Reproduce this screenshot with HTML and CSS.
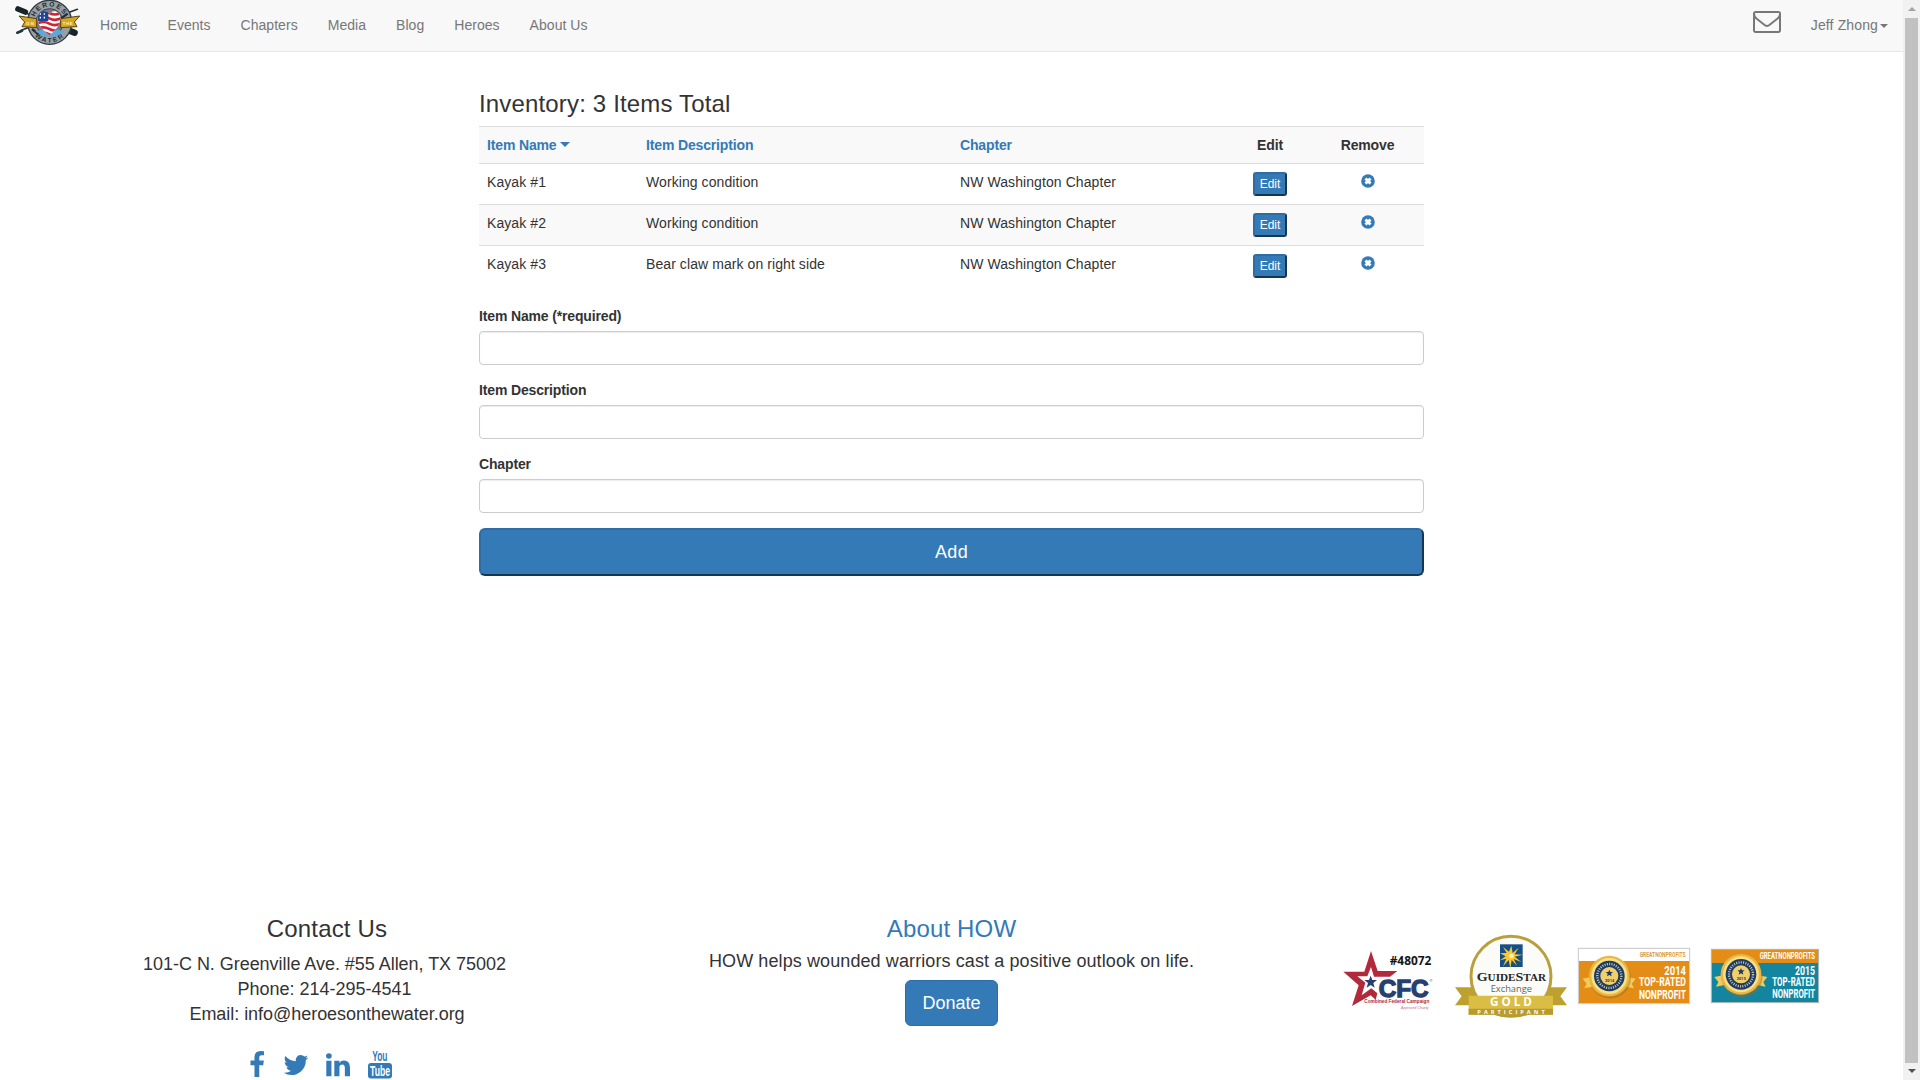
FILE: index.html
```html
<!DOCTYPE html>
<html lang="en">
<head>
<meta charset="utf-8">
<title>Heroes on the Water - Inventory</title>
<link rel="stylesheet" href="styles.css">
</head>
<body>
<div class="page">
  <nav class="navbar">
    <a class="brand" href="#" aria-label="Heroes on the Water">
      <svg width="85" height="47" viewBox="2 1 255 141">
        <g stroke-linecap="round">
          <path d="M70 36L215 92M66 92L234 29" stroke="#2a2f33" stroke-width="5"/>
          <path d="M56 28l22 9" stroke="#15252b" stroke-width="17"/>
          <path d="M196 88l30 11" stroke="#15252b" stroke-width="19"/>
          <path d="M54 99l14-6" stroke="#1d3a44" stroke-width="8"/>
        </g>
        <circle cx="151" cy="68" r="66" fill="#9b9fa3" stroke="#2c3d44" stroke-width="4"/>
        <circle cx="151" cy="68" r="41" fill="#777d82" stroke="#39444a" stroke-width="3"/>
        <path d="M98 88l20 16M205 42l-20 14" stroke="#222b2f" stroke-width="7"/>
        <path id="arcTop" d="M105 58A47 47 0 0 1 197 58" fill="none"/>
        <path id="arcLow" d="M97 95A60 60 0 0 0 205 95" fill="none"/>
        <g font-family="Liberation Sans" font-weight="bold" fill="#202b31">
          <text font-size="20"><textPath href="#arcTop" startOffset="6" textLength="108">HEROES</textPath></text>
          <text font-size="20"><textPath href="#arcLow" startOffset="17" textLength="96">WATER</textPath></text>
        </g>
        <path d="M59 49l53 8v27l-44-3 8-14z" fill="#d9a41e" stroke="#594111" stroke-width="3"/>
        <path d="M241 49l-57 8v27l49-3-8-14z" fill="#d9a41e" stroke="#594111" stroke-width="3"/>
        <path d="M108 95q38-12 88 0-18 16-44 17-26-2-44-17z" fill="#5aa9dc"/>
        <path id="heart" d="M151 107c-16-14-36-27-36-50 0-25 26-28 36-15 10-13 32-8 32 13 0 24-17 38-32 52z" fill="#fff"/>
        <clipPath id="heartClip"><use href="#heart"/></clipPath>
        <g clip-path="url(#heartClip)">
          <path d="M112 40q20-10 38 0t38-2M112 56q20-10 38 0t38-2M112 72q20-10 38 0t38-2M112 88q20-10 38 0t38-2M112 104q20-10 38 0t38-2" fill="none" stroke="#cf2336" stroke-width="8"/>
          <path d="M110 30h37v34h-37z" fill="#1f4690"/>
          <path d="M121 43h4M133 43h4M121 54h4M133 54h4" stroke="#fff" stroke-width="5"/>
        </g>
        <text x="80" y="76" font-family="Liberation Sans" font-size="13" font-weight="bold" fill="#fff3b8" textLength="24">ON</text>
        <text x="190" y="76" font-family="Liberation Sans" font-size="13" font-weight="bold" fill="#fff3b8" textLength="30">THE</text>
      </svg>
    </a>
    <a href="#">Home</a><a href="#">Events</a><a href="#">Chapters</a><a href="#">Media</a><a href="#">Blog</a><a href="#">Heroes</a><a href="#">About Us</a>
    <span class="spacer"></span>
    <a class="mail" href="#" aria-label="Messages"><svg width="28" height="28" viewBox="0 0 1792 1792"><path fill="#777" d="M1664 1504v-768q-32 36-69 66-268 206-426 338-51 43-83 67t-86.500 48.500-102.500 24.500h-2q-48 0-102.500-24.500t-86.500-48.500-83-67q-158-132-426-338-37-30-69-66v768q0 13 9.500 22.500t22.500 9.500h1472q13 0 22.500-9.500t9.500-22.500zm0-1051v-24.500l-.5-13-3-12.500-5.500-9-9-7.500-14-2.500h-1472q-13 0-22.500 9.500t-9.500 22.500q0 168 147 284 193 152 401 317 6 5 35 29.500t46 37.500 44.500 31.500 50.500 27.500 43 9h2q20 0 43-9t50.500-27.500 44.500-31.500 46-37.500 35-29.500q208-165 401-317 54-43 100.500-115.500t46.500-131.500zm128-37v1088q0 66-47 113t-113 47h-1472q-66 0-113-47t-47-113v-1088q0-66 47-113t113-47h1472q66 0 113 47t47 113z"/></svg></a>
    <a class="user" href="#">Jeff Zhong<span class="caret"></span></a>
  </nav>

  <main class="main">
    <h3>Inventory: 3 Items Total</h3>
    <table class="items">
      <colgroup><col class="c-name"><col class="c-desc"><col class="c-chap"><col class="c-edit"><col class="c-rem"></colgroup>
      <thead>
        <tr><th><a href="#">Item Name<span class="caret sort"></span></a></th><th><a href="#">Item Description</a></th><th><a href="#">Chapter</a></th><th class="mid">Edit</th><th class="mid">Remove</th></tr>
      </thead>
      <tbody>
        <tr><td>Kayak #1</td><td>Working condition</td><td>NW Washington Chapter</td><td class="mid"><button class="btn btn-xs">Edit</button></td><td class="mid"><svg class="remove" viewBox="0 0 14 14"><circle cx="7" cy="7" r="6.800"/><path d="M4.500 4.500l5 5M9.500 4.500l-5 5"/></svg></td></tr>
        <tr><td>Kayak #2</td><td>Working condition</td><td>NW Washington Chapter</td><td class="mid"><button class="btn btn-xs">Edit</button></td><td class="mid"><svg class="remove" viewBox="0 0 14 14"><circle cx="7" cy="7" r="6.800"/><path d="M4.500 4.500l5 5M9.500 4.500l-5 5"/></svg></td></tr>
        <tr><td>Kayak #3</td><td>Bear claw mark on right side</td><td>NW Washington Chapter</td><td class="mid"><button class="btn btn-xs">Edit</button></td><td class="mid"><svg class="remove" viewBox="0 0 14 14"><circle cx="7" cy="7" r="6.800"/><path d="M4.500 4.500l5 5M9.500 4.500l-5 5"/></svg></td></tr>
      </tbody>
    </table>
    <form>
      <label for="name">Item Name (*required)</label>
      <input id="name" type="text">
      <label for="desc">Item Description</label>
      <input id="desc" type="text">
      <label for="chapter">Chapter</label>
      <input id="chapter" type="text">
      <button type="button" class="btn btn-block">Add</button>
    </form>
  </main>

  <footer class="footer">
    <section class="contact">
      <h3>Contact Us</h3>
      <p class="address">101-C N. Greenville Ave. #55 Allen, TX 75002</p>
      <p class="phone">Phone: 214-295-4541</p>
      <p class="email">Email: info@heroesonthewater.org</p>
      <div class="social">
        <svg class="fb" width="16" height="28" viewBox="256 0 1024 1792"><path d="M1215 12v264h-157q-86 0-116 36t-30 108v189h293l-39 296h-254v759h-306v-759h-255v-296h255v-218q0-186 104-288.500t277-102.500q147 0 228 12z"/></svg>
        <svg class="tw" width="28" height="28" viewBox="0 0 1792 1792"><path d="M1684 408q-67 98-162 167 1 14 1 42 0 130-38 259.500t-115.500 248.500-184.500 210.500-258 146-323 54.500q-271 0-496-145 35 4 78 4 225 0 401-138-105-2-188-64.500t-114-159.500q33 5 61 5 43 0 85-11-112-23-185.500-111.500t-73.500-205.500v-4q68 38 146 41-66-44-105-115t-39-154q0-88 44-163 121 149 294.500 238.500t371.500 99.500q-8-38-8-74 0-134 94.500-228.500t228.500-94.500q140 0 236 102 109-21 205-78-37 115-142 178 93-10 186-50z"/></svg>
        <svg class="li" width="28" height="28" viewBox="0 0 1792 1792"><path d="M477 625v991h-330v-991h330zm21-306q1 73-50.500 122t-135.500 49h-2q-82 0-132-49t-50-122q0-74 51.500-122.500t134.500-48.500 133 48.500 51 122.500zm1166 729v568h-329v-530q0-105-40.500-164.500t-126.500-59.500q-63 0-105.500 34.500t-63.500 85.500q-11 30-11 81v553h-329q2-399 2-647t-1-296l-1-48h329v144h-2q20-32 41-56t56.500-52 87-43.500 114.500-15.500q171 0 275 113.500t104 332.500z"/></svg>
        <svg class="yt" width="24" height="28" viewBox="0 0 24 28">
          <rect x="0" y="12" width="24" height="15.500" rx="3"/>
          <text x="4.200" y="10.300" font-size="14.500" font-weight="bold" textLength="15.200" lengthAdjust="spacingAndGlyphs">You</text>
          <text x="2" y="24.800" font-size="14" font-weight="bold" fill="#fff" textLength="20" lengthAdjust="spacingAndGlyphs">Tube</text>
        </svg>
      </div>
    </section>
    <section class="about">
      <h3><a href="#">About HOW</a></h3>
      <p>HOW helps wounded warriors cast a positive outlook on life.</p>
      <a class="donate" href="#">Donate</a>
    </section>
    <section class="badges">
      <svg width="90" height="66" viewBox="0 0 270 198">
        <path fill="#b3293c" d="M81 0L101 60H160L138 77H90L81 48 70 76H40L64 95 53 133 82 112 100 127 95 146 80 133 24 165 44 103-2 62H61Z"/>
        <path fill="#28406f" d="M80 74l5 13h14l-11 9 4 14-12-8-12 8 4-14-11-9h14z"/>
        <text x="137" y="41" font-family="Open Sans" font-weight="bold" font-size="36" fill="#151515" textLength="125" lengthAdjust="spacingAndGlyphs">#48072</text>
        <text x="104" y="138" font-family="Liberation Sans" font-weight="bold" font-size="72" fill="#28406f" stroke="#28406f" stroke-width="4" textLength="150" lengthAdjust="spacingAndGlyphs">CFC</text>
        <circle cx="261" cy="88" r="3" fill="none" stroke="#28406f"/>
        <text x="61" y="157" font-family="Liberation Sans" font-weight="bold" font-size="14" fill="#b3293c" textLength="195" lengthAdjust="spacingAndGlyphs">Combined Federal Campaign</text>
        <text x="171" y="175" font-family="Liberation Sans" font-style="italic" font-size="11" fill="#c5717c" textLength="83" lengthAdjust="spacingAndGlyphs">Approved Charity</text>
      </svg>
      <svg width="112" height="83" viewBox="0 0 336 249">
        <path d="M0 157h60v54H0l20-27zM336 157h-60v54h60l-20-27z" fill="#bda02f"/>
        <circle cx="168" cy="124" r="120" fill="#fbfbf8" stroke="#b9a03c" stroke-width="9"/>
        <path d="M41 182h253v57H41z" fill="#d9bd45"/>
        <path d="M41 221h253v18H41z" fill="#b99a2e"/>
        <path d="M115 239h106q-53 16-106 0z" fill="#b99a2e"/>
        <rect x="135" y="28" width="68" height="68" fill="#155087"/>
        <path d="M169 32l4 22 18-16-12 20 24 1-24 6 20 16-23-9 10 20-16-17-4 26-5-26-17 19 10-23-19 5 17-12-17-9 20-1-11-18 18 14z" fill="#ffc72f"/>
        <circle cx="169" cy="63" r="7" fill="#fff1a6"/>
        <text x="65" y="137" font-family="Liberation Serif" font-weight="bold" fill="#252525" font-size="39" textLength="208" lengthAdjust="spacingAndGlyphs">G<tspan font-size="31">UIDE</tspan>S<tspan font-size="31">TAR</tspan></text>
        <text x="107" y="171" font-family="Open Sans" font-size="28" fill="#666" textLength="124" lengthAdjust="spacingAndGlyphs">Exchange</text>
        <text x="105" y="212" font-family="Open Sans" font-weight="bold" font-size="35" fill="#fff" textLength="126">GOLD</text>
        <text x="67" y="236" font-family="Open Sans" font-weight="bold" font-size="17" fill="#fff" textLength="202">PARTICIPANT</text>
      </svg>
      <svg width="112" height="56" viewBox="0 0 336 168">
        <rect x="1" y="1" width="334" height="166" fill="#fff" stroke="#c6c6c6" stroke-width="3"/>
        <path d="M3 39h330v126H3z" fill="#e38d17"/>
        <g id="seal">
          <path d="M14 92l30-6v30l-25 5 7-14zM173 92l-30-6v30l25 5-7-14z" fill="#f3cb59"/>
          <circle cx="97" cy="90" r="62" fill="#a36a13" opacity=".45"/>
          <circle cx="94" cy="84" r="61" fill="#e8b641"/>
          <circle cx="94" cy="84" r="54" fill="#f9df85"/>
          <circle cx="94" cy="84" r="46" fill="#213c64"/>
          <circle cx="94" cy="84" r="36" fill="none" stroke="#c8cfb0" stroke-width="7" stroke-dasharray="3 4"/>
          <circle cx="94" cy="84" r="27" fill="#f3cf68"/>
          <path d="M94 65l3 7h8l-6 5 2 8-7-4-7 4 2-8-6-5h8z" fill="#213c64"/>
        </g>
        <text x="81" y="102" font-family="Roboto" font-weight="bold" font-size="12" fill="#213c64" textLength="28">2014</text>
        <g font-family="Roboto" font-weight="bold" fill="#fff">
          <text x="185" y="28" font-size="22" fill="#dc9a38" textLength="138" lengthAdjust="spacingAndGlyphs">GREATNONPROFITS</text>
          <text x="259" y="80" font-size="37" textLength="65" lengthAdjust="spacingAndGlyphs">2014</text>
          <text x="183" y="115" font-size="37" textLength="141" lengthAdjust="spacingAndGlyphs">TOP-RATED</text>
          <text x="183" y="152" font-size="37" textLength="141" lengthAdjust="spacingAndGlyphs">NONPROFIT</text>
        </g>
      </svg>
      <svg width="108" height="54" viewBox="0 0 324 162">
        <rect x="1" y="1" width="322" height="160" fill="#13859f" stroke="#b9b9b9" stroke-width="3"/>
        <path d="M3 3h318v39H3z" fill="#e38d17"/>
        <use href="#seal" x="-4" y="-8"/>
        <text x="77" y="94" font-family="Roboto" font-weight="bold" font-size="12" fill="#213c64" textLength="28">2015</text>
        <g font-family="Roboto" font-weight="bold" fill="#fff">
          <text x="146" y="30" font-size="25" textLength="166" lengthAdjust="spacingAndGlyphs">GREATNONPROFITS</text>
          <text x="252" y="78" font-size="36" textLength="60" lengthAdjust="spacingAndGlyphs">2015</text>
          <text x="184" y="112" font-size="36" textLength="128" lengthAdjust="spacingAndGlyphs">TOP-RATED</text>
          <text x="184" y="148" font-size="36" textLength="128" lengthAdjust="spacingAndGlyphs">NONPROFIT</text>
        </g>
      </svg>
    </section>
  </footer>
</div>
<div class="scrollbar"><i class="up"></i><span class="thumb"></span><i class="down"></i></div>
</body>
</html>
```
FILE: styles.css
```css
* { box-sizing: border-box; }
body {
  margin: 0;
  height: 1080px;
  overflow: hidden;
  display: flex;
  background: #fff;
  color: #333;
  font: 14px/20px "Liberation Sans", Arial, sans-serif;
}
a { color: #337ab7; text-decoration: none; }
h3 { margin: 0 0 10px; font-size: 24px; font-weight: 400; line-height: 26.400px; letter-spacing: .160px; }
p { margin: 0; }
svg { overflow: visible; }
.page { width: 1903px; }

/* Top navigation */
.navbar {
  display: flex;
  height: 52px;
  background: #f8f8f8;
  border-bottom: 1px solid #e7e7e7;
}
.navbar a { padding: 15px; color: #777; letter-spacing: .040px; }
.navbar .brand { width: 85px; padding: 0; }
.spacer { flex: 1; }
.navbar .mail { padding: 7px 15px; }
.navbar .mail svg { display: block; }
.navbar .user { letter-spacing: .130px; }
.caret {
  display: inline-block;
  margin-left: 2px;
  vertical-align: middle;
  border: 4px solid transparent;
  border-top-color: currentColor;
  border-bottom: 0;
}
.sort { margin-left: 4px; vertical-align: 3px; border-width: 5px 4.500px 0; }
.items .sort { border-width: 5px 5px 0; }

/* Inventory table and form */
.main { width: 945px; height: 864px; margin-left: 479px; padding-top: 38.600px; }
.main h3 { margin-bottom: 9px; }
.items { width: 945px; table-layout: fixed; border-spacing: 0; }
.c-name { width: 159px; }
.c-desc { width: 314px; }
.c-chap { width: 277px; }
.c-edit { width: 82px; }
.c-rem { width: 113px; }
.items th, .items td { padding: 8px; text-align: left; vertical-align: top; border-top: 1px solid #ddd; }
.items td { height: 41px; letter-spacing: .080px; }
.items th, label { letter-spacing: -.150px; }
.items tr:nth-child(even), .items thead tr { background: #f9f9f9; }
.items .mid { text-align: center; }
.remove { display: block; width: 14px; height: 14px; margin: 2px auto 0; }
.remove circle { fill: #337ab7; }
.remove path { stroke: #fff; stroke-width: 3px; }
form { padding-top: 20px; }
label { display: block; margin-bottom: 5px; font-weight: 700; }
input {
  display: block;
  width: 100%;
  height: 34px;
  margin-bottom: 15px;
  border: 1px solid #ccc;
  border-radius: 4px;
  box-shadow: inset 0 1px 1px rgba(0, 0, 0, .075);
}
.btn { display: block; margin: 0 auto; color: #fff; background: #337ab7; border: 2px outset #2e6da4; font-family: inherit; }
.btn-xs { height: 24px; padding: 1px 5px; border-radius: 3px; font-size: 12px; line-height: 18px; }
.btn-block { width: 100%; height: 48px; padding: 0; border-radius: 6px; font-size: 18px; line-height: 24px; letter-spacing: .300px; }

/* Footer */
.footer { display: grid; grid-template-columns: 654px 595px 1fr; font-size: 18px; line-height: 25px; text-align: center; }
.phone, .address { padding-right: 5px; }
.address, .email { letter-spacing: -.040px; }
.social { display: flex; padding: 24px 0 0 249px; fill: #337ab7; }
.tw { margin-left: 17px; }
.li { margin-left: 14px; }
.yt { margin-left: 16px; }
.about p { margin-top: -3px; letter-spacing: .100px; }
.donate {
  display: inline-block;
  height: 46px;
  margin-top: 6px;
  padding: 10px 16px;
  border: 1px solid #2e6da4;
  border-radius: 6px;
  background: #337ab7;
  color: #fff;
  line-height: 24px;
}
.badges { display: flex; align-items: flex-start; padding: 19px 0 0 95px; }
.badges svg:nth-child(1) { margin-top: 16px; }
.badges svg:nth-child(2) { margin-left: 21px; }
.badges svg:nth-child(3) { margin: 13px 0 0 11px; }
.badges svg:nth-child(4) { margin: 14px 0 0 21px; }

/* Window scrollbar */
.scrollbar { display: flex; flex-direction: column; align-items: center; justify-content: space-between; width: 17px; padding: 7px 0; background: #f1f1f1; }
.thumb { width: 13px; height: 1045px; background: #c1c1c1; }
.up, .down { border: 4px solid transparent; }
.up { border-top: 0; border-bottom-color: #a3a3a3; }
.down { border-bottom: 0; border-top-color: #505050; }
```
